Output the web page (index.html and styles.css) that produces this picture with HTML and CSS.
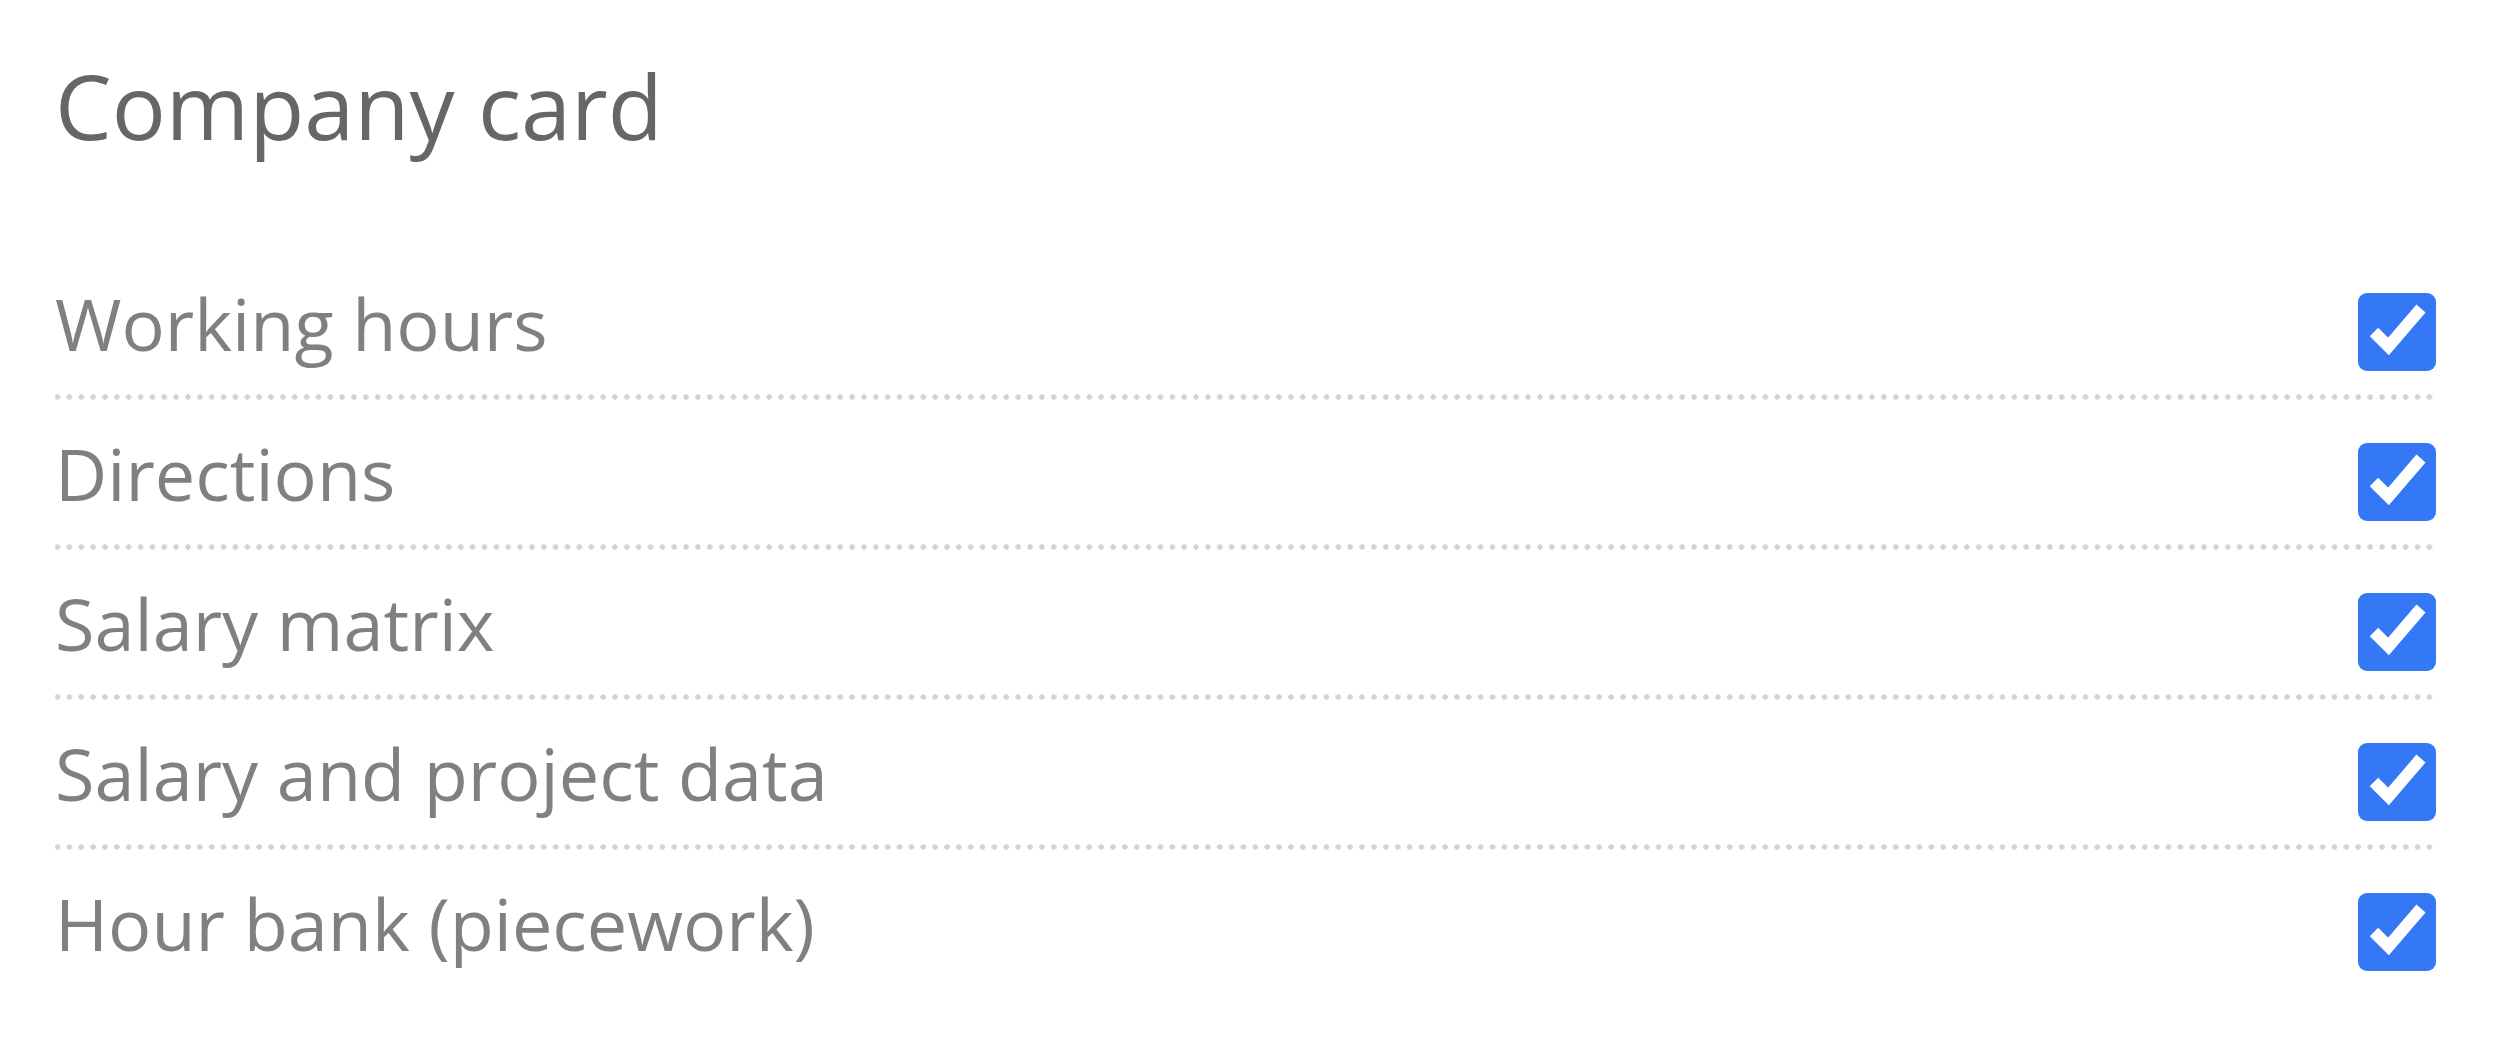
FILE: index.html
```html
<!DOCTYPE html>
<html lang="en">
<head>
<meta charset="utf-8">
<title>Company card</title>
<link rel="stylesheet" href="styles.css">
</head>
<body>
<main class="card">
  <h1 class="title">Company card</h1>
  <ul class="list">
    <li class="row"><span class="label">Working hours</span><span class="check"><svg viewBox="0 0 78 78" width="78" height="78"><rect width="78" height="78" rx="9" fill="#3478f6"/><polyline points="16,39 30.5,53.5 63,15.5" fill="none" stroke="#fff" stroke-width="12" stroke-linecap="butt" stroke-linejoin="miter"/></svg></span></li>
    <li class="row"><span class="label">Directions</span><span class="check"><svg viewBox="0 0 78 78" width="78" height="78"><rect width="78" height="78" rx="9" fill="#3478f6"/><polyline points="16,39 30.5,53.5 63,15.5" fill="none" stroke="#fff" stroke-width="12" stroke-linecap="butt" stroke-linejoin="miter"/></svg></span></li>
    <li class="row"><span class="label">Salary matrix</span><span class="check"><svg viewBox="0 0 78 78" width="78" height="78"><rect width="78" height="78" rx="9" fill="#3478f6"/><polyline points="16,39 30.5,53.5 63,15.5" fill="none" stroke="#fff" stroke-width="12" stroke-linecap="butt" stroke-linejoin="miter"/></svg></span></li>
    <li class="row"><span class="label">Salary and project data</span><span class="check"><svg viewBox="0 0 78 78" width="78" height="78"><rect width="78" height="78" rx="9" fill="#3478f6"/><polyline points="16,39 30.5,53.5 63,15.5" fill="none" stroke="#fff" stroke-width="12" stroke-linecap="butt" stroke-linejoin="miter"/></svg></span></li>
    <li class="row last"><span class="label">Hour bank (piecework)</span><span class="check"><svg viewBox="0 0 78 78" width="78" height="78"><rect width="78" height="78" rx="9" fill="#3478f6"/><polyline points="16,39 30.5,53.5 63,15.5" fill="none" stroke="#fff" stroke-width="12" stroke-linecap="butt" stroke-linejoin="miter"/></svg></span></li>
  </ul>
</main>
</body>
</html>
```

FILE: styles.css
```css
html, body {
  margin: 0;
  padding: 0;
  background: #ffffff;
}

body {
  font-family: "Open Sans", "Noto Sans", sans-serif;
}

.card {
  padding: 51px 58px 0 55px;
}

.title {
  margin: 0 0 91px 0;
  font-size: 90px;
  line-height: 108px;
  font-weight: 400;
  color: #666666;
}

.list {
  list-style: none;
  margin: 0;
  padding: 0;
}

.row {
  display: flex;
  align-items: center;
  justify-content: space-between;
  box-sizing: border-box;
  height: 150px;
  padding-top: 14px;
  background-image: radial-gradient(circle at center, #d3d3d3 0, #d3d3d3 2.4px, rgba(211, 211, 211, 0) 3.1px);
  background-size: 11.87px 6px;
  background-repeat: repeat-x;
  background-position: -3.4px bottom;
}

.row.last {
  background-image: none;
}

.label {
  font-size: 72px;
  line-height: 86px;
  padding-bottom: 18px;
  color: #808080;
}

.check {
  display: flex;
  width: 78px;
  height: 78px;
}

.check svg {
  display: block;
}
```
